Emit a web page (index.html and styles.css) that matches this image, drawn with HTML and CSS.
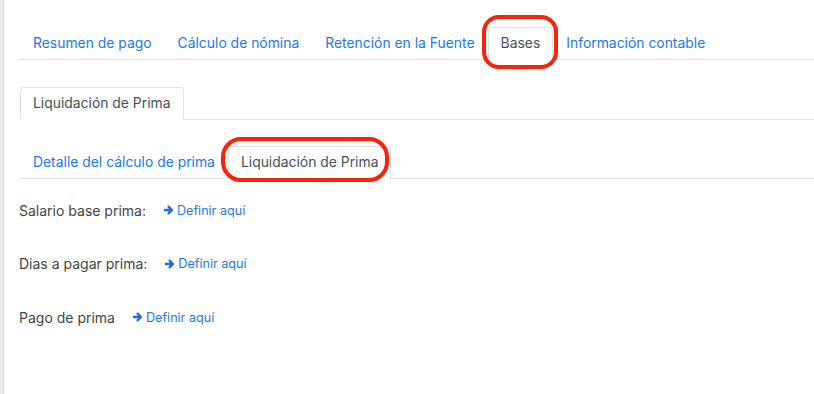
FILE: index.html
```html
<!DOCTYPE html>
<html lang="es">
<head>
<meta charset="utf-8">
<title>Bases - Liquidación de Prima</title>
<link rel="stylesheet" href="styles.css">
</head>
<body>
<div class="page">
  <ul class="tabs tabs-main">
    <li class="tab"><a class="tab-link">Resumen de pago</a></li>
    <li class="tab"><a class="tab-link">Cálculo de nómina</a></li>
    <li class="tab"><a class="tab-link">Retención en la Fuente</a></li>
    <li class="tab"><a class="tab-link active">Bases</a><span class="mark mark-bases"></span></li>
    <li class="tab"><a class="tab-link">Información contable</a></li>
  </ul>

  <ul class="tabs tabs-sub">
    <li class="tab"><a class="tab-link active">Liquidación de Prima</a></li>
  </ul>

  <ul class="tabs tabs-sub2">
    <li class="tab"><a class="tab-link">Detalle del cálculo de prima</a></li>
    <li class="tab"><a class="tab-link active">Liquidación de Prima</a><span class="mark mark-liq"></span></li>
  </ul>

  <div class="fields">
    <div class="field">
      <span class="label">Salario base prima:</span>
      <a class="define"><svg class="arrow" viewBox="0 0 10 10"><path d="M0.8 5H7.6M4.6 1.6L8 5L4.6 8.4"/></svg>Definir aquí</a>
    </div>
    <div class="field">
      <span class="label">Dias a pagar prima:</span>
      <a class="define"><svg class="arrow" viewBox="0 0 10 10"><path d="M0.8 5H7.6M4.6 1.6L8 5L4.6 8.4"/></svg>Definir aquí</a>
    </div>
    <div class="field">
      <span class="label">Pago de prima</span>
      <a class="define"><svg class="arrow" viewBox="0 0 10 10"><path d="M0.8 5H7.6M4.6 1.6L8 5L4.6 8.4"/></svg>Definir aquí</a>
    </div>
  </div>
</div>
</body>
</html>
```
FILE: styles.css
```css
html, body {
  margin: 0;
  padding: 0;
  height: 100%;
  background: #fff;
}
body {
  font-family: Inter, "Noto Sans", sans-serif;
  color: #4a4a4a;
}
.page {
  box-sizing: border-box;
  min-height: 100%;
  border-left: 3px solid #ececec;
  box-shadow: inset 1px 0 0 #dcdcdc;
  padding: 27px 0 0 17px;
}
.tabs {
  list-style: none;
  margin: 0;
  padding: 0;
  display: flex;
  border-bottom: 1px solid #dee2e6;
}
.tabs-sub { margin-top: 27px; }
.tabs-sub2 { margin-top: 26px; }
.tab {
  position: relative;
  margin-bottom: -1px;
}
.tab-link {
  display: block;
  padding: 6px 12px;
  border: 1px solid transparent;
  border-top-left-radius: 4px;
  border-top-right-radius: 4px;
  font-size: 13.9px;
  line-height: 19px;
  color: #1a7ae8;
  white-space: nowrap;
  cursor: pointer;
}
.tab-link.active {
  color: #495057;
  background: #fff;
  border-color: #dee2e6 #dee2e6 #fff;
}
.mark {
  position: absolute;
  border: 4.5px solid #f7230c;
  pointer-events: none;
}
.mark-bases {
  left: -6px;
  right: -5px;
  top: -12px;
  bottom: -9px;
  border-radius: 17px;
}
.mark-liq {
  left: -7px;
  right: 2px;
  top: -9px;
  bottom: -3px;
  border-radius: 20px;
}
.fields {
  display: flex;
  flex-direction: column;
  gap: 33.5px;
  margin-top: 21px;
}
.field {
  display: flex;
  align-items: center;
  height: 20px;
}
.label {
  font-size: 14px;
  color: #444;
  margin-left: -1px;
}
.define {
  display: inline-flex;
  align-items: center;
  margin-left: 18px;
  font-size: 12.6px;
  color: #1a7ae8;
  cursor: pointer;
}
.arrow {
  width: 10px;
  height: 10px;
  fill: none;
  stroke: #1a6fd6;
  stroke-width: 2.3;
  stroke-linecap: round;
  stroke-linejoin: round;
  margin-right: 3px;
}
```
